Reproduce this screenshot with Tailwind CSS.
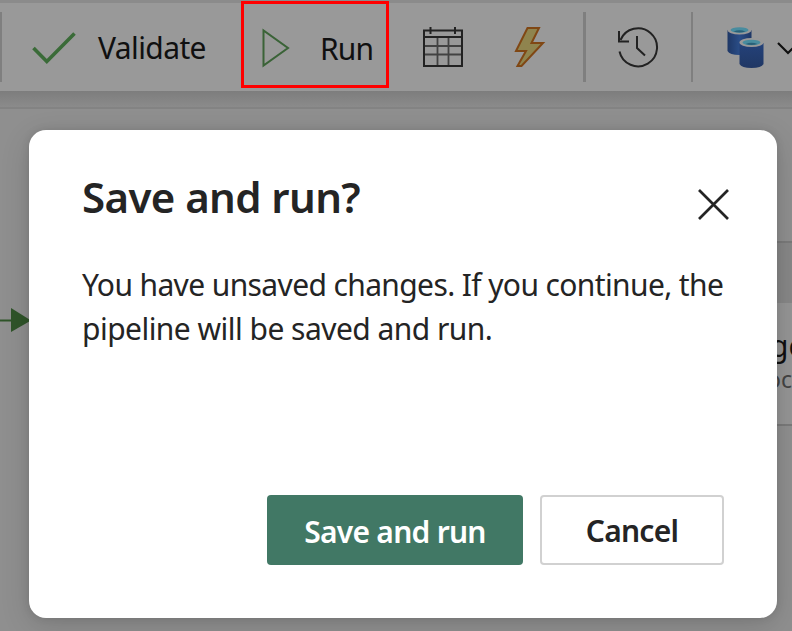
<!DOCTYPE html>
<html lang="en">
<head>
<meta charset="utf-8">
<title>Save and run?</title>
<script src="https://cdn.jsdelivr.net/npm/@tailwindcss/browser@4"></script>
</head>
<body class="relative w-[792px] h-[631px] overflow-hidden bg-[#8f8f8f] font-['Noto_Sans','Open_Sans',sans-serif] text-[#101010]">
  <header class="h-[91px] pt-[3px] bg-[#8b8b8b]">
    <div class="relative flex h-[88px] bg-[#999999] whitespace-nowrap">
      <div class="mt-[9px] h-[70px] w-[2px] shrink-0 bg-[#7f7f7f]"></div>
      <button class="flex w-[239px] shrink-0 items-center pl-[29px]">
        <svg class="h-[36px] w-[46px] shrink-0" viewBox="0 0 46 36" fill="none" stroke="#3a6b38" stroke-width="3.6"><path d="M2.500 19 15.800 32.500 43.500 4.500"/></svg>
        <span class="ml-[21px] mt-px text-[30px] tracking-[-0.6px]">Validate</span>
      </button>
      <button class="-mt-[2px] flex h-[87px] w-[148px] shrink-0 items-center border-[3px] border-[#ff0000] pl-[18px]">
        <svg class="mt-[6px] h-[40px] w-[30px] shrink-0" viewBox="0 0 30 40" fill="none" stroke="#3a6337" stroke-width="2"><path d="M1.500 2.500v35L26 20Z"/></svg>
        <span class="ml-[28px] mt-[7px] text-[30px] tracking-[-0.9px]">Run</span>
      </button>
      <button class="ml-[33px] mt-[23px] h-[42px] w-[42px] shrink-0">
        <svg class="h-[42px] w-[42px]" viewBox="0 0 42 42" fill="none"><path d="M2 20h38M2 28.500h38M15.500 12v27M26.500 12v27" stroke="#424242" stroke-width="1.800"/><path d="M2 4.500h38v35.500H2ZM2 11h38M8.500 1v7M33 1v7" stroke="#222" stroke-width="2"/></svg>
      </button>
      <button class="ml-[50px] mt-[23px] h-[42px] w-[34px] shrink-0">
        <svg class="h-[42px] w-[34px]" viewBox="0 0 34 42" fill="#8f844e" stroke="#804714" stroke-width="2"><path d="M13.500 2h11.500L17.500 17H29L7.500 40H3.500L12 25H2Z"/></svg>
      </button>
      <div class="ml-[35px] mt-[9px] h-[70px] w-[3px] shrink-0 bg-[#7f7f7f]"></div>
      <button class="ml-[31px] mt-[23px] h-[42px] w-[42px] shrink-0">
        <svg class="h-[42px] w-[42px]" viewBox="0 0 42 42" fill="none" stroke="#222" stroke-width="2"><path d="M2.500 25.500A19 19 0 1 0 3.500 14"/><path d="M2 5v10.500h10M20 10v12l8 7.500"/></svg>
      </button>
      <div class="ml-[32px] mt-[9px] h-[70px] w-[2px] shrink-0 bg-[#7f7f7f]"></div>
      <button class="ml-[34px] mt-[22px] h-[44px] w-[40px] shrink-0">
        <svg class="h-[44px] w-[40px]" viewBox="0 0 40 44">
          <defs>
            <linearGradient id="back"><stop stop-color="#1e3766"/><stop offset=".5" stop-color="#2a4d87"/><stop offset="1" stop-color="#1e3766"/></linearGradient>
            <linearGradient id="front" x2="0" y2="1"><stop stop-color="#24427a"/><stop offset="1" stop-color="#203764"/></linearGradient>
          </defs>
          <path d="M.500 5v21q2 4 12 4t12-4V5Z" fill="url(#back)"/><ellipse cx="12.500" cy="5" rx="12" ry="4.500" fill="#999"/><ellipse cx="12.500" cy="5" rx="9" ry="2.800" fill="#488c9f"/><path d="M6.500 6.500q6-2.500 12 0-6 2-12 0Z" fill="#286078"/>
          <path d="M12.500 18v21q2 4 12 4t12-4V18Z" fill="url(#front)"/><ellipse cx="24.500" cy="17.500" rx="12" ry="4.500" fill="#999"/><ellipse cx="24.500" cy="17.500" rx="9" ry="2.800" fill="#488c9f"/><path d="M18.500 19q6-2.500 12 0-6 2-12 0Z" fill="#286078"/>
        </svg>
      </button>
      <svg class="ml-[10px] mt-[38px] h-[14px] w-[24px] shrink-0" viewBox="0 0 24 14" fill="none" stroke="#101010" stroke-width="2.200"><path d="M1 2l10 10L21 2"/></svg>
    </div>
  </header>

  <div class="h-[18px] border-b-2 border-[#838383] bg-linear-to-b from-[#7d7d7d] to-[#8b8b8b]"></div>
  <main class="flex h-[522px] justify-between bg-[#8f8f8f]">
    <svg class="mt-[198px] h-[26px] w-[34px]" viewBox="0 0 34 26"><path d="M0 13.500h12" stroke="#2f5429" stroke-width="2"/><path d="M11 1v24l20-11.500Z" fill="#2f5429"/></svg>
    <section class="mt-[132px] h-[185px] w-[28px] overflow-hidden border-y-2 border-[#7a7a7a] bg-[#959595]">
      <div class="h-[60px] bg-[#878787]"></div>
      <p class="ml-[6px] mt-[25px] text-[30px] leading-[36px]">ge</p>
      <p class="ml-[3px] text-[23px] leading-[30px] text-[#444]">oc</p>
    </section>
  </main>

  <div role="dialog" class="absolute left-[29px] top-[130px] flex h-[488px] w-[748px] flex-col rounded-[17px] bg-white px-[53px] pb-[53px] text-[#242424] whitespace-nowrap shadow-[0_8px_30px_rgba(0,0,0,0.14),0_0_8px_rgba(0,0,0,0.1)]">
    <div class="flex justify-between">
      <h1 class="mt-[37px] text-[42px] leading-[60px] font-semibold tracking-[-0.6px]">Save and run?</h1>
      <svg class="-mr-[6px] mt-[58px] h-[33px] w-[33px]" viewBox="0 0 33 33" fill="none" stroke="#242424" stroke-width="2.700"><path d="M2 2l29 29M31 2 2 31"/></svg>
    </div>
    <p class="mt-[36px] text-[30px] leading-[44px] tracking-[-0.62px]">You have unsaved changes. If you continue, the<br><span class="tracking-[-0.53px]">pipeline will be saved and run.</span></p>
    <div class="mt-auto flex justify-end gap-[17px] text-[30px] font-semibold tracking-[-0.75px]">
      <button class="h-[70px] w-[256px] rounded-[4px] bg-[#417865] pt-[3px] text-white">Save and run</button>
      <button class="h-[70px] w-[184px] rounded-[4px] border-2 border-[#d1d1d1] pt-px">Cancel</button>
    </div>
  </div>
</body>
</html>
